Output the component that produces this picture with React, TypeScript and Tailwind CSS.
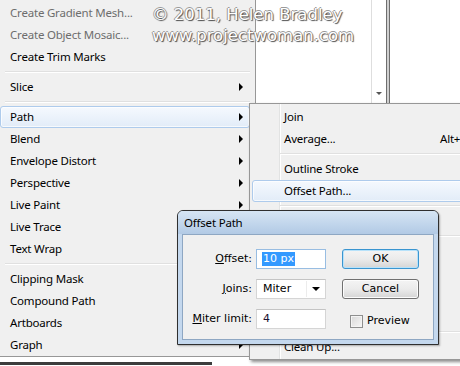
import clsx from "clsx";

const menuFont = "font-['Noto_Sans','Open_Sans',sans-serif] text-[11.5px] tracking-[-0.2px]";
const dlgFont = "font-['DejaVu_Sans','Liberation_Sans',sans-serif] text-[11px] tracking-normal";

type Item = { label: string; disabled?: boolean; arrow?: boolean; active?: boolean } | "sep";

const mainItems: Item[] = [
  { label: "Create Gradient Mesh...", disabled: true },
  { label: "Create Object Mosaic...", disabled: true },
  { label: "Create Trim Marks" },
  "sep",
  { label: "Slice", arrow: true },
  "sep",
  { label: "Path", arrow: true, active: true },
  { label: "Blend", arrow: true },
  { label: "Envelope Distort", arrow: true },
  { label: "Perspective", arrow: true },
  { label: "Live Paint", arrow: true },
  { label: "Live Trace", arrow: true },
  { label: "Text Wrap", arrow: true },
  "sep",
  { label: "Clipping Mask", arrow: true },
  { label: "Compound Path", arrow: true },
  { label: "Artboards", arrow: true },
  { label: "Graph", arrow: true },
];

const subItems: (({ label: string; shortcut?: string; active?: boolean }) | "sep")[] = [
  { label: "Join" },
  { label: "Average...", shortcut: "Alt+Ctrl+J" },
  "sep",
  { label: "Outline Stroke" },
  { label: "Offset Path...", active: true },
  "sep",
  { label: "Simplify..." },
  "sep",
  { label: "Add Anchor Points" },
  { label: "Remove Anchor Points" },
  { label: "Divide Objects Below" },
  { label: "Split Into Grid..." },
  "sep",
  { label: "Clean Up..." },
];

const highlight =
  "rounded-[3px] border-[#aecbec] bg-gradient-to-b from-[#f5f9fe] to-[#e2ecf8] shadow-[inset_0_0_0_1px_rgba(255,255,255,0.7)]";

function Separator({ indent }: { indent: string }) {
  return (
    <div className={clsx("flex h-[8px] flex-col justify-center", indent)}>
      <div className="h-px bg-[#e0e0e0]" />
      <div className="h-px bg-white" />
    </div>
  );
}

function MainMenu() {
  return (
    <div className="flex w-[256px] shrink-0 flex-col">
      <div className="w-[256px] border-r border-b border-[#979797] bg-[#f0f0f0] pt-[2px] pr-[5px]">
        {mainItems.map((item, i) =>
          item === "sep" ? (
            <Separator key={i} indent="ml-[5px]" />
          ) : (
            <div
              key={i}
              className={clsx(
                "flex h-[22px] items-center border pl-[9px]",
                item.active ? highlight : "border-transparent",
                item.disabled ? "text-[#6d6d6d]" : "text-black"
              )}
            >
              <span>{item.label}</span>
              {item.arrow ? (
                <span className="mr-[6px] ml-auto h-0 w-0 border-y-[4px] border-l-[4px] border-y-transparent border-l-black" />
              ) : null}
            </div>
          )
        )}
      </div>
      <div className="mt-[5px] h-[3px] w-[212px] bg-[#3c3c3c]" />
    </div>
  );
}

function SubMenu() {
  return (
    <div className="absolute top-[103px] left-[249px] w-[232px] border border-[#979797] bg-[#f0f0f0] bg-[linear-gradient(to_right,#f0f0f0_29px,#e2e3e3_29px,#e2e3e3_30px,#ffffff_30px,#ffffff_31px,#f0f0f0_31px)] pt-[2px] pb-[1px] shadow-[2px_2px_3px_rgba(0,0,0,0.45)]">
      {subItems.map((item, i) =>
        item === "sep" ? (
          <Separator key={i} indent="ml-[30px]" />
        ) : (
          <div
            key={i}
            className={clsx(
              "ml-[2px] grid h-[22px] grid-cols-[156px_auto] items-center border pl-[31px]",
              item.active ? highlight : "border-transparent"
            )}
          >
            <span>{item.label}</span>
            <span>{item.shortcut}</span>
          </div>
        )
      )}
    </div>
  );
}

function Dialog() {
  return (
    <div className="absolute top-[210px] left-[177px] w-[262px] rounded-t-[6px] border border-[#2f2f2f] bg-[#c4d8ee] shadow-[1px_1px_2px_rgba(0,0,0,0.3)]">
      <div className={clsx("flex h-[23px] items-center rounded-t-[5px] bg-gradient-to-b from-[#d6e5f4] to-[#b2cae5] pl-[6px] text-black", menuFont)}>
        Offset Path
      </div>
      <div className={clsx("mx-[4px] mb-[4px] flex border border-[#8ea7c3] bg-[#f0f0f0] pt-[14px] pb-[10px] pl-[7px] text-black", dlgFont)}>
        <div className="grid grid-cols-[62px_70px] gap-x-[4px] gap-y-[10px]">
          <span className="flex h-[20px] items-center justify-end">
            <span className="underline">O</span>ffset:
          </span>
          <div className="flex h-[20px] items-center border border-[#98bde2] bg-white pl-[5px]">
            <span className="bg-[#3399ff] px-[1px] leading-[14px] text-white">10 px</span>
          </div>
          <span className="flex h-[20px] items-center justify-end">
            <span className="underline">J</span>oins:
          </span>
          <div className="flex h-[20px] items-center border border-[#d5d5d5] border-t-[#c4c4c4] bg-white">
            <span className="w-[50px] border-r border-[#ececec] pl-[6px]">Miter</span>
            <span className="flex flex-1 justify-center">
              <span className="h-0 w-0 border-x-[4px] border-t-[4px] border-x-transparent border-t-black" />
            </span>
          </div>
          <span className="flex h-[20px] items-center justify-end">
            <span className="underline">M</span>iter limit:
          </span>
          <div className="flex h-[20px] items-center border border-[#d5d5d5] border-t-[#c4c4c4] bg-white pl-[6px] text-[#1c1030]">
            4
          </div>
        </div>
        <div className="ml-[16px] flex w-[77px] flex-col gap-[10px]">
          <div className="flex h-[20px] items-center justify-center rounded-[3px] border border-[#3a95d0] bg-gradient-to-b from-[#f4f4f4] via-[#ebebeb] to-[#d5d5d5] shadow-[inset_0_0_0_1px_#b7e2fa]">
            OK
          </div>
          <div className="flex h-[20px] items-center justify-center rounded-[3px] border border-[#707070] bg-gradient-to-b from-[#f4f4f4] via-[#ebebeb] to-[#d5d5d5] shadow-[inset_0_0_0_1px_#fcfcfc]">
            Cancel
          </div>
          <div className="flex h-[20px] items-center pt-[5px] pl-[8px]">
            <span className="h-[13px] w-[13px] border border-[#8e8f8f] bg-gradient-to-br from-[#d8d8d8] to-[#f7f7f7] shadow-[inset_0_0_0_1px_#f4f4f4]" />
            <span className="ml-[4px]">Preview</span>
          </div>
        </div>
      </div>
    </div>
  );
}

export default function App() {
  return (
    <div className={clsx("relative flex h-[366px] w-[460px] overflow-hidden bg-white", menuFont)}>
      <MainMenu />
      <div className="flex h-[103px] flex-1">
        <div className="w-[116px] border-r border-[#dedede]" />
        <div className="flex w-[14px] items-end justify-center pb-[8px]">
          <span className="h-0 w-0 border-x-[3px] border-t-[3px] border-x-transparent border-t-[#555]" />
        </div>
        <div className="w-[4px] border-x border-[#6e6e6e] bg-[#cfcfcf]" />
        <div className="flex-1" />
      </div>

      <div className="pointer-events-none absolute top-[4px] left-[152px] font-['DejaVu_Sans',sans-serif] text-[16.5px] leading-[21px] tracking-normal text-white [text-shadow:1px_1px_1px_#4a4a4a,-1px_0_0_#9a9a9a,0_-1px_0_#9a9a9a]">
        <div>© 2011, Helen Bradley</div>
        <div>www.projectwoman.com</div>
      </div>

      <SubMenu />
      <Dialog />
    </div>
  );
}
